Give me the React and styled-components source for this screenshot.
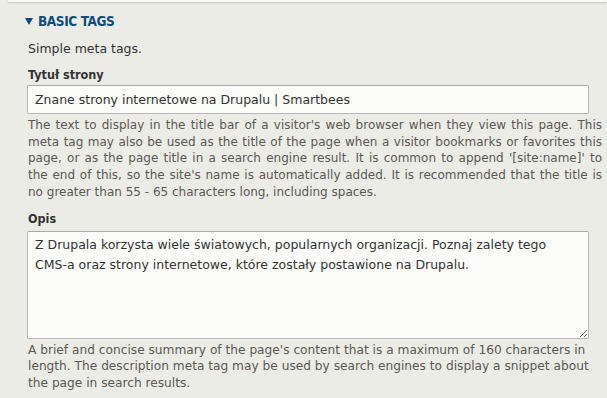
import { createGlobalStyle, styled } from "styled-components";

const Global = createGlobalStyle`
  html, body {
    margin: 0;
    padding: 0;
    background: #ecece7;
  }
  body {
    font-family: "DejaVu Sans", "Lucida Sans Unicode", sans-serif;
    color: #333;
  }
`;

const Page = styled.div`
  width: 607px;
  height: 398px;
  overflow: hidden;
  background: #ecece7;
`;

const TopEdge = styled.div`
  margin-left: 8px;
  height: 2px;
  background: #f6f6f3;
  box-shadow: 0 1px 2px rgba(0, 0, 0, 0.18);
`;

const Details = styled.section`
  padding: 11px 0 0 25px;
`;

const Summary = styled.div`
  display: flex;
  align-items: center;
  gap: 5px;
  color: #0b4d7c;
  font-family: "DejaVu Sans Condensed", "DejaVu Sans", sans-serif;
  font-weight: bold;
  font-size: 13.5px;
  letter-spacing: -0.4px;
  text-transform: uppercase;
  line-height: 16px;
  svg {
    width: 8px;
    height: 8px;
    fill: currentColor;
  }
`;

const Body = styled.div`
  padding: 11px 0 0 3px;
`;

const Intro = styled.p`
  margin: 0 0 10px;
  font-size: 12.5px;
  line-height: 17px;
`;

const Field = styled.div`
  margin-bottom: 10px;
`;

const Label = styled.label`
  display: block;
  font-family: "DejaVu Sans Condensed", "DejaVu Sans", sans-serif;
  font-weight: bold;
  font-size: 12.5px;
  line-height: 16px;
  color: #333;
  margin-bottom: ${(p) => p.$gap || 2}px;
`;

const TextInput = styled.input`
  box-sizing: border-box;
  display: block;
  width: 562px;
  height: 29px;
  margin-left: -1px;
  padding: 0 7px;
  border: 1px solid #b8b8b6;
  border-top-color: #a9a9a7;
  border-radius: 2px;
  background: #fcfcfa;
  font-family: inherit;
  font-size: 12.5px;
  color: #333;
  outline: none;
`;

const TextArea = styled.textarea`
  box-sizing: border-box;
  display: block;
  width: 562px;
  height: 108px;
  margin-left: -1px;
  padding: 3px 7px;
  border: 1px solid #b8b8b6;
  border-top-color: #a9a9a7;
  border-radius: 2px;
  background: #fcfcfa;
  font-family: inherit;
  font-size: 12.5px;
  line-height: 20px;
  color: #333;
  outline: none;
`;

const Description = styled.div`
  margin-top: 3px;
  font-size: ${(p) => p.$size || 12.2}px;
  line-height: 16.7px;
  color: #5b5853;
  width: 574px;
`;

/* one wrapped line of a description, stretched to the column width
   so the breaks fall where they do in the original */
const Line = styled.span`
  display: block;
  white-space: nowrap;
  text-align: ${(p) => (p.$last ? "left" : "justify")};
  text-align-last: ${(p) => (p.$last ? "left" : "justify")};
`;

const Arrow = () => (
  <svg viewBox="0 0 8 8">
    <path d="M0 1 H8 L4 8 Z" />
  </svg>
);

const titleHelp = [
  "The text to display in the title bar of a visitor's web browser when they view this page. This",
  "meta tag may also be used as the title of the page when a visitor bookmarks or favorites this",
  "page, or as the page title in a search engine result. It is common to append '[site:name]' to",
  "the end of this, so the site's name is automatically added. It is recommended that the title is",
  "no greater than 55 - 65 characters long, including spaces.",
];

export default function App() {
  return (
    <Page>
      <Global />
      <TopEdge />
      <Details>
        <Summary>
          <Arrow />
          Basic tags
        </Summary>
        <Body>
          <Intro>Simple meta tags.</Intro>
          <Field>
            <Label>Tytuł strony</Label>
            <TextInput
              readOnly
              value="Znane strony internetowe na Drupalu | Smartbees"
            />
            <Description $size={12}>
              {titleHelp.map((line, i) => (
                <Line key={i} $last={i === titleHelp.length - 1}>
                  {line}
                </Line>
              ))}
            </Description>
          </Field>
          <Field>
            <Label $gap={4}>Opis</Label>
            <TextArea
              readOnly
              value="Z Drupala korzysta wiele światowych, popularnych organizacji. Poznaj zalety tego CMS-a oraz strony internetowe, które zostały postawione na Drupalu."
            />
            <Description>
              A brief and concise summary of the page's content that is a
              maximum of 160 characters in length. The description meta tag may
              be used by search engines to display a snippet about the page in
              search results.
            </Description>
          </Field>
        </Body>
      </Details>
    </Page>
  );
}
